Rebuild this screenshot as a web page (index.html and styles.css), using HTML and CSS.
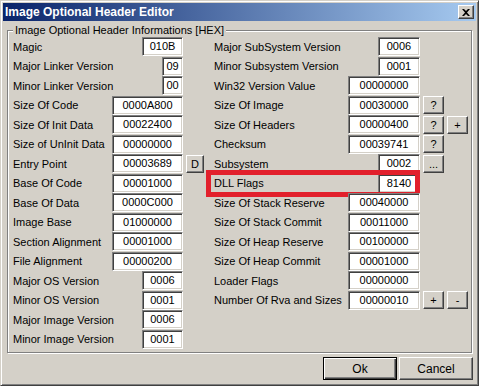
FILE: index.html
```html
<!DOCTYPE html>
<html lang="en">
<head>
  <meta charset="UTF-8">
  <title>Image Optional Header Editor</title>
  <link rel="stylesheet" href="styles.css">
</head>
<body>
  <div class="window">
    <div class="titlebar">
      <span class="title">Image Optional Header Editor</span>
      <button class="close-btn">
        <svg width="8" height="7" viewBox="0 0 8 7"><path d="M0 0h2l2 2 2-2h2L5 3.5 8 7H6L4 5 2 7H0l3-3.5z" fill="#000"/></svg>
      </button>
    </div>

    <fieldset class="group">
      <legend>Image Optional Header Informations [HEX]</legend>

      <div class="col left">
        <div class="row"><span class="label">Magic</span><span class="edit w4">010B</span></div>
        <div class="row"><span class="label">Major Linker Version</span><span class="edit w2">09</span></div>
        <div class="row"><span class="label">Minor Linker Version</span><span class="edit w2">00</span></div>
        <div class="row"><span class="label">Size Of Code</span><span class="edit w8">0000A800</span></div>
        <div class="row"><span class="label">Size Of Init Data</span><span class="edit w8">00022400</span></div>
        <div class="row"><span class="label">Size of UnInit Data</span><span class="edit w8">00000000</span></div>
        <div class="row"><span class="label">Entry Point</span><span class="edit w8">00003689</span><button class="btn">D</button></div>
        <div class="row"><span class="label">Base Of Code</span><span class="edit w8">00001000</span></div>
        <div class="row"><span class="label">Base Of Data</span><span class="edit w8">0000C000</span></div>
        <div class="row"><span class="label">Image Base</span><span class="edit w8">01000000</span></div>
        <div class="row"><span class="label">Section Alignment</span><span class="edit w8">00001000</span></div>
        <div class="row"><span class="label">File Alignment</span><span class="edit w8">00000200</span></div>
        <div class="row"><span class="label">Major OS Version</span><span class="edit w4">0006</span></div>
        <div class="row"><span class="label">Minor OS Version</span><span class="edit w4">0001</span></div>
        <div class="row"><span class="label">Major Image Version</span><span class="edit w4">0006</span></div>
        <div class="row"><span class="label">Minor Image Version</span><span class="edit w4">0001</span></div>
      </div>

      <div class="col right">
        <div class="row"><span class="label">Major SubSystem Version</span><span class="edit w4">0006</span></div>
        <div class="row"><span class="label">Minor Subsystem Version</span><span class="edit w4">0001</span></div>
        <div class="row"><span class="label">Win32 Version Value</span><span class="edit w8">00000000</span></div>
        <div class="row"><span class="label">Size Of Image</span><span class="edit w8">00030000</span><button class="btn">?</button></div>
        <div class="row"><span class="label">Size Of Headers</span><span class="edit w8">00000400</span><button class="btn">?</button><button class="btn">+</button></div>
        <div class="row"><span class="label">Checksum</span><span class="edit w8">00039741</span><button class="btn">?</button></div>
        <div class="row"><span class="label">Subsystem</span><span class="edit w4">0002</span><button class="btn dots">...</button></div>
        <div class="row marked"><span class="label">DLL Flags</span><span class="edit w4">8140</span></div>
        <div class="row"><span class="label">Size Of Stack Reserve</span><span class="edit w8">00040000</span></div>
        <div class="row"><span class="label">Size Of Stack Commit</span><span class="edit w8">00011000</span></div>
        <div class="row"><span class="label">Size Of Heap Reserve</span><span class="edit w8">00100000</span></div>
        <div class="row"><span class="label">Size Of Heap Commit</span><span class="edit w8">00001000</span></div>
        <div class="row"><span class="label">Loader Flags</span><span class="edit w8">00000000</span></div>
        <div class="row"><span class="label">Number Of Rva and Sizes</span><span class="edit w8">00000010</span><button class="btn">+</button><button class="btn">-</button></div>
      </div>
    </fieldset>

    <div class="actions">
      <button class="push default">Ok</button>
      <button class="push">Cancel</button>
    </div>
  </div>
</body>
</html>
```

FILE: styles.css
```css
body {
  margin: 0;
  font-family: 'Liberation Sans', Arial, sans-serif;
  font-size: 11px;
  color: #000;
}
.window {
  width: 479px;
  height: 386px;
  box-sizing: border-box;
  background: #d4d0c8;
  border: 1px solid;
  border-color: #d4d0c8 #404040 #404040 #d4d0c8;
  box-shadow: inset 1px 1px 0 #fff, inset -1px -1px 0 #808080;
  padding: 2px;
}
.titlebar {
  height: 18px;
  display: flex;
  align-items: center;
  justify-content: space-between;
  padding: 0 2px 0 2px;
  background: linear-gradient(to right, #0a246a, #a6caf0);
}
.title {
  color: #fff;
  font-weight: bold;
  font-size: 12px;
}
.close-btn {
  width: 16px;
  height: 14px;
  padding: 0;
  display: flex;
  align-items: center;
  justify-content: center;
  background: #d4d0c8;
  border: 1px solid;
  border-color: #fff #404040 #404040 #fff;
  box-shadow: inset -1px -1px 0 #808080;
}
.group {
  margin: 3px 4px 0 4px;
  padding: 0 3px 3px 5px;
  border: 1px solid #808080;
  box-shadow: inset 1px 1px 0 #fff, 1px 1px 0 #fff;
  display: flex;
  gap: 10px;
  min-width: 0;
}
.group legend {
  padding: 0 2px;
  line-height: 13px;
  background: #d4d0c8;
}
.col {
  display: flex;
  flex-direction: column;
}
.col.left {
  width: 191px;
}
.col.right {
  width: 254px;
}
.row {
  position: relative;
  height: 19.5px;
  display: grid;
  align-items: center;
  column-gap: 3px;
}
.left .row {
  grid-template-columns: 1fr auto 18px;
}
.right .row {
  grid-template-columns: 1fr auto 21px 21px;
}
.label {
  white-space: nowrap;
}
.edit {
  justify-self: end;
  box-sizing: border-box;
  height: 19px;
  line-height: 17px;
  text-align: center;
  background: #fff;
  border: 1px solid;
  border-color: #808080 #fff #fff #808080;
  box-shadow: inset 1px 1px 0 #404040, inset -1px -1px 0 #d4d0c8;
}
.w2 { width: 21px; }
.w4 { width: 42px; }
.w8 { width: 72px; }
.left .w4 { width: 41px; }
.left .w8 { width: 71px; }
.btn {
  box-sizing: border-box;
  height: 18px;
  padding: 0;
  font: inherit;
  background: #d4d0c8;
  border: 1px solid;
  border-color: #fff #404040 #404040 #fff;
  box-shadow: inset -1px -1px 0 #808080;
}
.btn.dots {
  line-height: 12px;
}
.row.marked::after {
  content: "";
  position: absolute;
  top: -4px;
  bottom: -4px;
  left: -8px;
  right: 48px;
  border: 5px solid #e2202c;
}
.actions {
  display: flex;
  justify-content: flex-end;
  gap: 2px;
  margin: 4px 3px 0 0;
}
.push {
  box-sizing: border-box;
  width: 74px;
  height: 23px;
  font: inherit;
  font-size: 12px;
  background: #d4d0c8;
  border: 1px solid;
  border-color: #fff #404040 #404040 #fff;
  box-shadow: inset -1px -1px 0 #808080;
}
.push.default {
  border: 1px solid #000;
  box-shadow: inset 1px 1px 0 #fff, inset -1px -1px 0 #404040, inset -2px -2px 0 #808080;
}
```
